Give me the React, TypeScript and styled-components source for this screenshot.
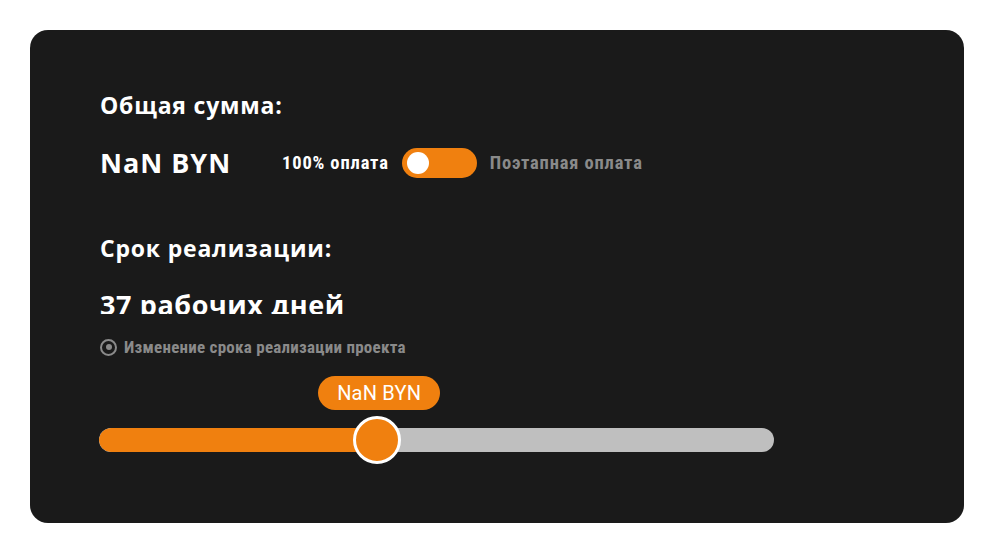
import React from 'react'
import styled, { createGlobalStyle } from 'styled-components'

const GlobalStyle = createGlobalStyle`
  html, body {
    margin: 0;
    padding: 0;
    background: #ffffff;
  }
  body {
    font-family: "Open Sans", "Noto Sans", sans-serif;
  }
`

const Page = styled.div`
  width: 994px;
  height: 553px;
  padding: 30px;
  box-sizing: border-box;
`

const Card = styled.div`
  height: 493px;
  background: #1a1a1a;
  border-radius: 18px;
  padding: 60px 70px 0;
  box-sizing: border-box;
  display: flex;
  flex-direction: column;
  color: #ffffff;
`

const Title = styled.div<{ $top?: number }>`
  font-family: "Open Sans", "Noto Sans", sans-serif;
  font-weight: 700;
  font-size: 23px;
  letter-spacing: 0.8px;
  line-height: 30px;
  margin-top: ${({ $top }) => $top ?? 0}px;
`

const Row = styled.div`
  display: flex;
  align-items: center;
  margin-top: 28px;
  height: 30px;
`

const Price = styled.div`
  font-family: "Open Sans", "Noto Sans", sans-serif;
  font-weight: 700;
  font-size: 27px;
  letter-spacing: 1px;
  line-height: 30px;
  width: 182px;
`

const SwitchLabel = styled.span<{ $active?: boolean }>`
  font-family: "Liberation Sans Narrow", "Roboto Condensed", "Roboto", sans-serif;
  font-weight: 700;
  font-size: 18.5px;
  letter-spacing: 0.85px;
  color: ${({ $active }) => ($active ? '#ffffff' : '#8a8a8a')};
`

const Toggle = styled.div`
  width: 75px;
  height: 30px;
  border-radius: 15px;
  background: #f0800f;
  margin: 0 13px;
  display: flex;
  align-items: center;
  padding-left: 5px;
  box-sizing: border-box;
`

const Knob = styled.div`
  width: 22px;
  height: 22px;
  border-radius: 50%;
  background: #ffffff;
`

const Days = styled.div`
  font-family: "Open Sans", "Noto Sans", sans-serif;
  font-weight: 700;
  font-size: 27px;
  letter-spacing: 0.6px;
  line-height: 30px;
  height: 24px;
  overflow: hidden;
  margin-top: 27px;
`

const Option = styled.div`
  display: flex;
  align-items: center;
  gap: 7px;
  margin-top: 23px;
`

const Radio = styled.div`
  width: 13px;
  height: 13px;
  border-radius: 50%;
  border: 2px solid #8a8a8a;
  display: flex;
  align-items: center;
  justify-content: center;
`

const Dot = styled.div`
  width: 6px;
  height: 6px;
  border-radius: 50%;
  background: #8a8a8a;
`

const OptionText = styled.span`
  font-family: "Liberation Sans Narrow", "Roboto Condensed", "Roboto", sans-serif;
  font-weight: 700;
  font-size: 17px;
  letter-spacing: 0.25px;
  color: #8a8a8a;
`

const Slider = styled.div`
  position: relative;
  width: 675px;
  margin-left: -1px;
  margin-top: 71px;
`

const Track = styled.div`
  height: 24px;
  border-radius: 12px;
  background: #bfbfbf;
  overflow: hidden;
`

const Fill = styled.div`
  height: 100%;
  background: #f0800f;
  border-radius: 12px 0 0 12px;
`

const Thumb = styled.div`
  position: absolute;
  top: 50%;
  width: 48px;
  height: 48px;
  border-radius: 50%;
  background: #f0800f;
  border: 3px solid #ffffff;
  box-sizing: border-box;
  transform: translate(-50%, -50%);
`

const Bubble = styled.div`
  position: absolute;
  bottom: 42px;
  height: 34px;
  padding: 0 19px;
  border-radius: 17px;
  background: #f0800f;
  color: #ffffff;
  font-family: "Roboto", "Open Sans", sans-serif;
  font-size: 20px;
  letter-spacing: 0.2px;
  line-height: 34px;
  white-space: nowrap;
  transform: translateX(-50%);
`

export default function App(): JSX.Element {
  const value = 41.2

  return (
    <>
      <GlobalStyle />
      <Page>
        <Card>
          <Title>Общая сумма:</Title>
          <Row>
            <Price>NaN BYN</Price>
            <SwitchLabel $active>100% оплата</SwitchLabel>
            <Toggle>
              <Knob />
            </Toggle>
            <SwitchLabel>Поэтапная оплата</SwitchLabel>
          </Row>
          <Title $top={55}>Срок реализации:</Title>
          <Days>37 рабочих дней</Days>
          <Option>
            <Radio>
              <Dot />
            </Radio>
            <OptionText>Изменение срока реализации проекта</OptionText>
          </Option>
          <Slider>
            <Bubble style={{ left: `${value + 0.3}%` }}>NaN BYN</Bubble>
            <Track>
              <Fill style={{ width: `${value}%` }} />
            </Track>
            <Thumb style={{ left: `${value}%` }} />
          </Slider>
        </Card>
      </Page>
    </>
  )
}
